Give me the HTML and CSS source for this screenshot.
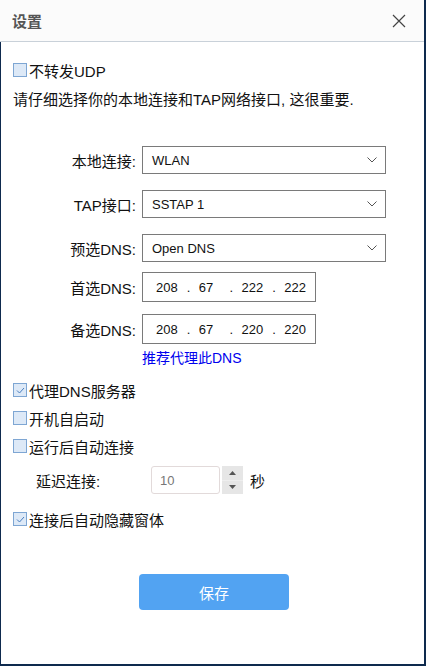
FILE: index.html
```html
<!DOCTYPE html>
<html lang="zh-CN">
<head>
    <meta charset="UTF-8">
    <meta name="viewport" content="width=device-width, initial-scale=1.0">
    <title>设置</title>
    <link rel="stylesheet" href="styles.css">
</head>
<body>
    <div class="window">
        <div class="titlebar">
            <span class="title">设置</span>
            <svg class="close" width="14" height="14" viewBox="0 0 14 14">
                <path d="M1 1 L13 13 M13 1 L1 13" stroke="#444" stroke-width="1.2" fill="none"/>
            </svg>
        </div>
        <div class="content">
            <label class="check first">
                <span class="box"></span>不转发UDP
            </label>
            <p class="notice">请仔细选择你的本地连接和TAP网络接口, 这很重要.</p>

            <div class="form">
                <div class="row">
                    <span class="label">本地连接:</span>
                    <div class="select">WLAN<svg class="arrow" width="10" height="6" viewBox="0 0 10 6"><path d="M0.5 0.5 L5 5 L9.5 0.5" stroke="#555" fill="none"/></svg></div>
                </div>
                <div class="row">
                    <span class="label">TAP接口:</span>
                    <div class="select">SSTAP 1<svg class="arrow" width="10" height="6" viewBox="0 0 10 6"><path d="M0.5 0.5 L5 5 L9.5 0.5" stroke="#555" fill="none"/></svg></div>
                </div>
                <div class="row">
                    <span class="label">预选DNS:</span>
                    <div class="select">Open DNS<svg class="arrow" width="10" height="6" viewBox="0 0 10 6"><path d="M0.5 0.5 L5 5 L9.5 0.5" stroke="#555" fill="none"/></svg></div>
                </div>
                <div class="row ip-row">
                    <span class="label">首选DNS:</span>
                    <div class="ip">
                        <span class="oct">208</span><span class="dot">.</span>
                        <span class="oct">67</span><span class="dot">.</span>
                        <span class="oct">222</span><span class="dot">.</span>
                        <span class="oct">222</span>
                    </div>
                </div>
                <div class="row ip-row second">
                    <span class="label">备选DNS:</span>
                    <div class="ip">
                        <span class="oct">208</span><span class="dot">.</span>
                        <span class="oct">67</span><span class="dot">.</span>
                        <span class="oct">220</span><span class="dot">.</span>
                        <span class="oct">220</span>
                    </div>
                </div>
                <a class="link" href="#">推荐代理此DNS</a>
            </div>

            <div class="options">
                <label class="check"><span class="box checked"><svg width="9" height="7" viewBox="0 0 9 7"><path d="M1 3.5 L3.5 6 L8 1" stroke="#4a7fc0" stroke-width="1" fill="none"/></svg></span>代理DNS服务器</label>
                <label class="check"><span class="box"></span>开机自启动</label>
                <label class="check"><span class="box"></span>运行后自动连接</label>
            </div>

            <div class="delay">
                <span class="delay-label">延迟连接:</span>
                <div class="spin">
                    <span class="spin-input">10</span>
                    <div class="spin-btns">
                        <span class="spin-btn"><svg width="7" height="4" viewBox="0 0 7 4"><path d="M0 4 L3.5 0 L7 4 Z" fill="#555"/></svg></span>
                        <span class="spin-btn"><svg width="7" height="4" viewBox="0 0 7 4"><path d="M0 0 L3.5 4 L7 0 Z" fill="#555"/></svg></span>
                    </div>
                </div>
                <span class="unit">秒</span>
            </div>

            <label class="check last"><span class="box checked"><svg width="9" height="7" viewBox="0 0 9 7"><path d="M1 3.5 L3.5 6 L8 1" stroke="#4a7fc0" stroke-width="1" fill="none"/></svg></span>连接后自动隐藏窗体</label>

            <button class="btn">保存</button>
        </div>
    </div>
</body>
</html>
```

FILE: styles.css
```css
body {
    margin: 0;
    padding: 0;
    background-color: #ffffff;
    font-family: "Liberation Sans", "Noto Sans CJK SC", sans-serif;
    font-size: 15px;
    color: #111;
}
.window {
    width: 426px;
    height: 666px;
    box-sizing: border-box;
    border-right: 2px solid #0e2a4e;
    border-bottom: 2px solid #0e2a4e;
    display: flex;
    flex-direction: column;
}
.titlebar {
    height: 41px;
    border-bottom: 1px solid #c9d1d9;
    background-color: #fbfbfb;
    display: flex;
    align-items: center;
    justify-content: space-between;
    padding: 0 18px 0 12px;
}
.title {
    font-size: 15px;
    font-weight: bold;
    color: #555;
    font-family: "Noto Sans CJK SC", sans-serif;
}
.close {
    display: block;
}
.content {
    flex: 1;
    border-left: 1px solid #0e2a4e;
    padding: 18px 12px 0 12px;
    display: flex;
    flex-direction: column;
}
.check {
    display: flex;
    align-items: center;
    height: 20px;
    gap: 2px;
    font-size: 15px;
    color: #111;
}
.box {
    width: 12px;
    height: 12px;
    border: 1px solid #7ea6d3;
    background-color: #dde9f7;
    display: flex;
    align-items: center;
    justify-content: center;
    flex-shrink: 0;
}
.notice {
    margin: 10px 0 0 0;
    line-height: 20px;
}
.form {
    margin-top: 36px;
    display: flex;
    flex-direction: column;
    gap: 16px;
}
.row {
    display: flex;
    align-items: center;
    gap: 6px;
}
.label {
    width: 123px;
    text-align: right;
}
.select {
    width: 242px;
    height: 26px;
    border: 1px solid #7a7a7a;
    display: flex;
    align-items: center;
    justify-content: space-between;
    padding: 0 8px 0 9px;
    box-sizing: content-box;
    width: 225px;
    font-size: 13px;
}
.arrow {
    display: block;
}
.ip-row {
    margin-top: -6px;
}
.ip-row.second {
    margin-top: -4px;
}
.ip {
    width: 172px;
    height: 28px;
    border: 1px solid #7a7a7a;
    display: flex;
    align-items: center;
    font-size: 13px;
    padding-left: 13px;
    box-sizing: content-box;
    width: 159px;
}
.oct {
    width: 31px;
}
.dot {
    width: 12px;
}
.link {
    margin: -12px 0 0 129px;
    color: #0000ee;
    text-decoration: none;
    line-height: 20px;
    font-size: 14px;
}
.options {
    margin-top: 12px;
    display: flex;
    flex-direction: column;
    gap: 8px;
}
.delay {
    margin-top: 10px;
    height: 28px;
    display: flex;
    align-items: center;
    padding-left: 23px;
}
.delay-label {
    width: 115px;
}
.spin {
    display: flex;
    align-items: stretch;
    height: 28px;
}
.spin-input {
    width: 59px;
    border: 1px solid #e2dada;
    border-radius: 3px;
    padding-left: 8px;
    display: flex;
    align-items: center;
    color: #777;
    font-size: 13px;
}
.spin-btns {
    margin-left: 2px;
    width: 21px;
    display: flex;
    flex-direction: column;
    gap: 1px;
    background-color: #eeeeee;
}
.spin-btn {
    flex: 1;
    background-color: #e6e6e6;
    display: flex;
    align-items: center;
    justify-content: center;
}
.unit {
    margin-left: 7px;
}
.last {
    margin-top: 15px;
}
.btn {
    margin: 45px 0 0 126px;
    width: 150px;
    height: 36px;
    border: none;
    border-radius: 4px;
    background-color: #52a3f2;
    color: #ffffff;
    font-size: 15px;
    font-family: "Noto Sans CJK SC", sans-serif;
}
```
